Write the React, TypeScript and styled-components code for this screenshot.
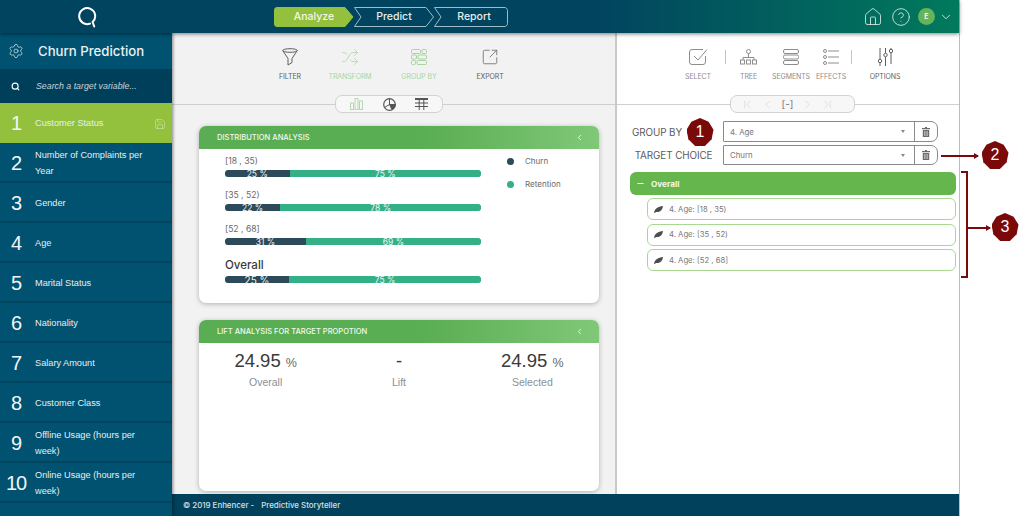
import React from 'react';
import styled, { createGlobalStyle } from 'styled-components';
import {
  ChevronDown, ChevronFirst, ChevronLast, ChevronLeft, ChevronRight, CircleHelp, House, Minus, Save, Search, Settings, Shuffle, SquareArrowOutUpRight,
} from 'lucide-react';

const GlobalStyle = createGlobalStyle`
  html, body { margin: 0; padding: 0; background: #fff; }
  * { box-sizing: border-box; }
  body { font-family: Inter, "Liberation Sans", sans-serif; overflow: hidden; }
`;

const Page = styled.div`
  position: relative;
  width: 1023px;
  height: 516px;
  overflow: hidden;
  background: #fff;
`;

const Frame = styled.div`
  width: 960px;
  height: 516px;
  display: grid;
  grid-template-columns: 172px 1fr;
  grid-template-rows: 33px 1fr;
  border-right: 1px solid #bdbdbd;
`;

const Header = styled.header`
  grid-column: 1 / 3;
  position: relative;
  z-index: 3;
  display: flex;
  align-items: center;
  background: linear-gradient(90deg, #01445f 0%, #01445f 62%, #017a5c 100%);
  box-shadow: 0 1px 4px rgba(0, 0, 0, 0.5);
`;

const Logo = styled.div`
  width: 274px;
  padding-left: 78px;
  display: flex;
`;

const Stepper = styled.nav`
  display: flex;
`;

const Step = styled.div<{ $w: number; $active?: boolean; $shift?: number }>`
  position: relative;
  width: ${p => p.$w}px;
  height: 20px;
  padding-left: ${p => p.$shift || 0}px;
  display: flex;
  align-items: center;
  justify-content: center;
  color: ${p => (p.$active ? '#f2f7e6' : '#e8eef0')};
  font-size: 10.5px;
  font-weight: 500;
  span { position: relative; }
  svg { position: absolute; left: 0; top: 0; }
`;

const HeaderRight = styled.div`
  margin-left: auto;
  display: flex;
  align-items: center;
  padding-right: 6px;
  color: #dfeee9;
`;

const Avatar = styled.div`
  width: 17px;
  height: 17px;
  margin: 0 4px 0 7px;
  border-radius: 50%;
  background: #67b359;
  color: #f4f9f1;
  display: flex;
  align-items: center;
  justify-content: center;
  font-size: 7px;
  font-weight: 700;
`;

const Sidebar = styled.aside`
  position: relative;
  z-index: 2;
  background: #005270;
  box-shadow: 1px 0 3px rgba(0, 0, 0, 0.45);
`;

const SideTitle = styled.div`
  height: 36px;
  display: flex;
  align-items: center;
  padding-left: 8px;
  gap: 14px;
  color: #e9f1f4;
  font-size: 13.2px;
  font-weight: 500;
`;

const SearchRow = styled.div`
  height: 34px;
  display: flex;
  align-items: center;
  padding-left: 11px;
  gap: 16px;
  background: #003f5a;
  color: #fff;
  em {
    font-family: "Liberation Sans", sans-serif;
    font-size: 8.8px;
    color: #c6d5db;
  }
`;

const VarRow = styled.div<{ $active?: boolean }>`
  height: 40px;
  padding-top: 2px;
  display: flex;
  align-items: center;
  position: relative;
  background: ${p => (p.$active ? '#93c13e' : '#005270')};
  border-bottom: 2px solid ${p => (p.$active ? '#93c13e' : '#004660')};
  font-family: "Liberation Sans", sans-serif;
  color: #e6eff2;
`;

const VarNum = styled.div`
  width: 32px;
  text-align: center;
  font-size: 20px;
  letter-spacing: -1px;
  color: #f2f6f8;
  flex: none;
`;

const VarName = styled.div`
  margin-left: 3px;
  width: 118px;
  font-size: 9.2px;
  line-height: 16px;
`;

const SaveMark = styled.div`
  position: absolute;
  right: 6px;
  top: 15px;
  display: flex;
  color: #dcebbd;
`;

const Content = styled.main`
  display: grid;
  grid-template-columns: 443px 1fr;
  grid-template-rows: 1fr 22px;
  min-height: 0;
`;

const LeftPanel = styled.section`
  background: #f2f2f2;
  border-right: 2px solid #c9c9c9;
  width: 445px;
  min-height: 0;
  overflow: hidden;
`;

const RightPanel = styled.section`
  background: #fff;
  margin-left: 2px;
  min-height: 0;
`;

const Toolbar = styled.div<{ $start: number }>`
  height: 62px;
  display: flex;
  padding: 15px 0 0 ${p => p.$start}px;
`;

const ToolItem = styled.div<{ $w: number; $off?: boolean; $soft?: boolean }>`
  width: ${p => p.$w}px;
  flex: none;
  display: flex;
  flex-direction: column;
  align-items: center;
  color: ${p => (p.$off ? '#a9d5a0' : p.$soft ? '#8d8d8d' : '#5f5f5f')};
  svg { height: 18px; display: block; }
`;

const ToolLabel = styled.div`
  margin-top: 6px;
  font-size: 7px;
  line-height: 9px;
  white-space: nowrap;
  letter-spacing: -0.1px;
`;

const ToolSep = styled.div`
  width: 1px;
  height: 14px;
  margin-top: 2px;
  background: #c4c4c4;
  flex: none;
`;

const RuleRow = styled.div`
  display: flex;
  align-items: center;
  height: 18px;
`;

const Rule = styled.div<{ $w?: number }>`
  height: 1px;
  background: #cfcfcf;
  width: ${p => (p.$w ? `${p.$w}px` : 'auto')};
  flex: ${p => (p.$w ? 'none' : 1)};
`;

const Pill = styled.div<{ $w: number; $l: number; $r: number }>`
  width: ${p => p.$w}px;
  height: 18px;
  border: 1px solid #d2d2d2;
  border-radius: 7px;
  background: #f7f7f7;
  display: flex;
  align-items: center;
  justify-content: space-between;
  padding: 0 ${p => p.$r}px 0 ${p => p.$l}px;
  flex: none;
`;

const PagerMark = styled.span`
  font-size: 10px;
  line-height: 12px;
  color: #777;
`;

const Card = styled.article<{ $h: number }>`
  width: 400px;
  height: ${p => p.$h}px;
  margin: 13px 0 17px 27px;
  background: #fff;
  border-radius: 7px;
  overflow: hidden;
  box-shadow: 0 1px 5px rgba(0, 0, 0, 0.28);
  & + & { margin-top: 0; }
`;

const CardHead = styled.div`
  height: 23px;
  display: flex;
  align-items: center;
  justify-content: space-between;
  padding: 0 15px 0 18px;
  color: #f1f8ee;
  font-size: 7.55px;
  font-weight: 500;
  background: linear-gradient(90deg, #5aad52 0%, #59ad52 55%, #80c878 100%);
`;

const DistBody = styled.div`
  display: flex;
  padding: 1px 0 0 26px;
`;

const DistRows = styled.div`
  width: 256px;
`;

const DistLabel = styled.div<{ $big?: boolean }>`
  height: ${p => (p.$big ? 24 : 20)}px;
  line-height: ${p => (p.$big ? 27 : 22)}px;
  font-size: ${p => (p.$big ? 11.5 : 8.6)}px;
  font-weight: ${p => (p.$big ? 500 : 400)};
  color: ${p => (p.$big ? '#3a3a3a' : '#6a6a6a')};
`;

const Bar = styled.div`
  height: 7px;
  margin-bottom: 7px;
  display: flex;
  border-radius: 3.5px;
  background: #33b086;
`;

const BarPart = styled.div<{ $dark?: boolean; $big?: boolean }>`
  height: 7px;
  display: flex;
  align-items: center;
  justify-content: center;
  color: #eef7f4;
  font-size: ${p => (p.$big ? 10 : 8.5)}px;
  white-space: nowrap;
  background: ${p => (p.$dark ? '#2d4a5a' : '#33b086')};
  border-radius: ${p => (p.$dark ? '3.5px 0 0 3.5px' : '0 3.5px 3.5px 0')};
`;

const Legend = styled.div`
  margin: 4px 0 0 26px;
  display: flex;
  flex-direction: column;
  gap: 9px;
`;

const LegendItem = styled.div<{ $color: string }>`
  display: flex;
  align-items: center;
  gap: 11px;
  height: 14px;
  font-size: 8px;
  color: #6a6a6a;
  &::before {
    content: '';
    width: 7px;
    height: 7px;
    border-radius: 50%;
    background: ${p => p.$color};
  }
`;

const Stats = styled.div`
  display: grid;
  grid-template-columns: repeat(3, 1fr);
  padding-top: 6px;
  text-align: center;
  font-family: "Liberation Sans", sans-serif;
`;

const StatValue = styled.div`
  height: 24px;
  font-size: 18.5px;
  line-height: 24px;
  color: #3a3a3a;
  small { font-size: 12.5px; color: #666; }
`;

const StatLabel = styled.div`
  margin-top: 2px;
  font-size: 10.5px;
  line-height: 14px;
  color: #8b8f94;
`;

const Footer = styled.footer`
  grid-column: 1 / 3;
  background: #01415c;
  display: flex;
  align-items: center;
  padding-left: 11px;
  gap: 7px;
  color: #d5e1e6;
  font-size: 7.9px;
  font-weight: 500;
`;

const Form = styled.div`
  padding: 8px 0 0 15px;
`;

const FormRow = styled.div<{ $h: number; $gap: number }>`
  display: flex;
  align-items: center;
  height: ${p => p.$h}px;
  margin-bottom: ${p => p.$gap}px;
`;

const FormLabel = styled.div`
  width: 91px;
  font-size: 9.9px;
  color: #5b5b5b;
  white-space: nowrap;
  letter-spacing: -0.1px;
`;

const Select = styled.div`
  width: 215px;
  height: 100%;
  display: flex;
  border: 1px solid #8a8a8a;
  border-radius: 1px 7px 7px 1px;
`;

const SelectValue = styled.div`
  flex: 1;
  display: flex;
  align-items: center;
  justify-content: space-between;
  padding: 0 9px 0 6px;
  font-size: 7.8px;
  color: #777;
  &::after {
    content: '';
    border: 2.5px solid transparent;
    border-top: 3px solid #888;
    border-bottom: 0;
  }
`;

const SelectTrash = styled.div`
  width: 23px;
  border-left: 1px solid #8a8a8a;
  display: flex;
  align-items: center;
  justify-content: center;
`;

const Tree = styled.div`
  padding: 7px 3px 0 13px;
  display: flex;
  flex-direction: column;
  align-items: flex-end;
`;

const TreeRoot = styled.div`
  width: 100%;
  height: 23px;
  margin-bottom: 3px;
  display: flex;
  align-items: center;
  gap: 6px;
  padding-left: 6px;
  border-radius: 6px;
  background: #65b64c;
  color: #f1f8ed;
  font-size: 8.2px;
  font-weight: 700;
`;

const TreeLeaf = styled.div`
  width: 309px;
  height: 22px;
  margin-bottom: 3.5px;
  display: flex;
  align-items: center;
  gap: 6px;
  padding-left: 6px;
  border: 1px solid #a8d892;
  border-radius: 6px;
  font-size: 7.7px;
  color: #777;
`;

const Badge = styled.div<{ $x: number; $y: number }>`
  position: absolute;
  left: ${p => p.$x - 13.5}px;
  top: ${p => p.$y - 14}px;
  width: 27px;
  height: 28px;
  display: flex;
  align-items: center;
  justify-content: center;
  background: #7a0909;
  clip-path: polygon(50% 0, 82% 13%, 100% 42%, 93% 76%, 68% 100%, 32% 100%, 7% 76%, 0 42%, 18% 13%);
  color: #fff;
  font-family: "Liberation Sans", sans-serif;
  font-size: 16px;
`;

const Arrow = styled.div<{ $x: number; $y: number; $w: number }>`
  position: absolute;
  left: ${p => p.$x}px;
  top: ${p => p.$y}px;
  width: ${p => p.$w}px;
  height: 2px;
  background: #7a0909;
  &::after {
    content: '';
    position: absolute;
    right: -1px;
    top: -2px;
    border-left: 5px solid #7a0909;
    border-top: 3px solid transparent;
    border-bottom: 3px solid transparent;
  }
`;

const Bracket = styled.div`
  position: absolute;
  left: 961px;
  top: 171px;
  width: 7px;
  height: 107px;
  border: 2px solid #7a0909;
  border-left: 0;
`;

const FILTER_ROWS = [
  { label: '[18 , 35)', churn: 25, bar: 25.2, keep: 75 },
  { label: '[35 , 52)', churn: 22, bar: 21.6, keep: 78 },
  { label: '[52 , 68]', churn: 31, bar: 31.6, keep: 69 },
];

const VARIABLES = [
  'Number of Complaints per Year',
  'Gender',
  'Age',
  'Marital Status',
  'Nationality',
  'Salary Amount',
  'Customer Class',
  'Offline Usage (hours per week)',
  'Online Usage (hours per week)',
];

const LogoMark = () => (
  <svg width="19" height="22" viewBox="0 0 19 22" fill="none" stroke="#fff" strokeWidth="2">
    <path d="M12 17.6A8 8 0 1 1 14.6 16L16.2 20.5" strokeLinecap="round" strokeLinejoin="round" />
  </svg>
);

const StepShape = ({ w, active, last }: { w: number; active?: boolean; last?: boolean }) => {
  const d = active
    ? `M3 .5H${w - 9}L${w - 1} 10L${w - 9} 19.5H3A2.5 2.5 0 0 1 .5 17V3A2.5 2.5 0 0 1 3 .5Z`
    : last
      ? `M.5 .5H${w - 4}A3 3 0 0 1 ${w - .5} 3.5V16.5A3 3 0 0 1 ${w - 4} 19.5H.5L7 10Z`
      : `M.5 .5H${w - 8}L${w - .5} 10L${w - 8} 19.5H.5L7 10Z`;
  return (
    <svg width={w} height="20" viewBox={`0 0 ${w} 20`}>
      <path d={d} fill={active ? '#93c13e' : 'none'} stroke={active ? '#93c13e' : '#9fbcc7'} />
    </svg>
  );
};

const FunnelIcon = () => (
  <svg width="16" height="18" viewBox="0 0 16 18" fill="none" stroke="currentColor">
    <ellipse cx="8" cy="2.5" rx="7.3" ry="1.8" />
    <path d="M.7 2.5L6 10.5V17L10 14.5V10.5L15.3 2.5" />
  </svg>
);

const GroupIcon = () => (
  <svg width="16" height="16" viewBox="0 0 16 16" fill="none" stroke="currentColor">
    <rect x=".5" y=".5" width="9" height="4" rx="1" /><rect x="11" y=".5" width="4.5" height="4" rx="1" />
    <rect x=".5" y="6" width="5" height="4" rx="1" /><rect x="7" y="6" width="8.5" height="4" rx="1" />
    <rect x=".5" y="11.5" width="4" height="4" rx="1" /><rect x="6" y="11.5" width="9.5" height="4" rx="1" />
  </svg>
);

const SelectIcon = () => (
  <svg width="19" height="18" viewBox="0 0 19 18" fill="none" stroke="currentColor">
    <path d="M16.5 8V14A2.5 2.5 0 0 1 14 16.5H3A2.5 2.5 0 0 1 .5 14V4A2.5 2.5 0 0 1 3 1.5H14" />
    <path d="M5 8L9 12L18 1.5" />
  </svg>
);

const TreeIcon = () => (
  <svg width="17" height="16" viewBox="0 0 17 16" fill="none" stroke="currentColor">
    <circle cx="8.5" cy="2.5" r="2" /><path d="M8.5 4.5V9M3 11V8.5H14V11" />
    <rect x=".5" y="11" width="4" height="4" /><rect x="6.5" y="11" width="4" height="4" /><rect x="12.5" y="11" width="4" height="4" />
  </svg>
);

const SegmentsIcon = () => (
  <svg width="16" height="16" viewBox="0 0 16 16" fill="none" stroke="currentColor">
    <rect x=".5" y=".5" width="15" height="4" rx="1.5" /><rect x=".5" y="6" width="15" height="4" rx="1.5" /><rect x=".5" y="11.5" width="15" height="4" rx="1.5" />
  </svg>
);

const EffectsIcon = () => (
  <svg width="16" height="16" viewBox="0 0 16 16" fill="none" stroke="currentColor">
    <circle cx="2" cy="2" r="1.5" /><circle cx="2" cy="8" r="1.5" /><circle cx="2" cy="14" r="1.5" />
    <path d="M5 2H16M5 8H16M5 14H16" />
  </svg>
);

const OptionsIcon = () => (
  <svg width="15" height="18" viewBox="0 0 15 18" fill="none" stroke="currentColor">
    <path d="M2 0V11M2 15V18M7.5 0V5M7.5 9V18M13 0V1M13 5V16" />
    <circle cx="2" cy="13" r="1.7" /><circle cx="7.5" cy="7" r="1.7" /><circle cx="13" cy="3" r="1.7" />
  </svg>
);

const TrashIcon = () => (
  <svg width="8" height="10" viewBox="0 0 8 10">
    <path d="M3 0H5V1H8V2.2H0V1H3ZM.8 3H7.2V10H.8Z" fill="#6b6b6b" />
    <path d="M2.6 4V9M4 4V9M5.4 4V9" stroke="#fff" strokeWidth=".5" />
  </svg>
);

const BarsIcon = () => (
  <svg width="13" height="12" viewBox="0 0 13 12" fill="none" stroke="#b5d8ae">
    <rect x=".5" y="5" width="3" height="6.5" /><rect x="5" y=".5" width="3" height="11" /><rect x="9.5" y="3" width="3" height="8.5" />
  </svg>
);

const PieIcon = () => (
  <svg width="13" height="13" viewBox="0 0 13 13" fill="none" stroke="#555">
    <circle cx="6.5" cy="6.5" r="5.8" strokeWidth="1.2" /><path d="M6.5 6.5V.7M6.5 6.5L1.5 9.5" />
    <path d="M6.5 6.5H12.3A5.8 5.8 0 0 1 9 11.7Z" fill="#555" />
  </svg>
);

const TableIcon = () => (
  <svg width="13" height="12" viewBox="0 0 13 12" fill="none" stroke="#555">
    <path d="M0 1H13" strokeWidth="2" /><path d="M0 5H13M0 8.5H13M4.2 2V12M8.8 2V12" />
  </svg>
);

const LeafIcon = () => (
  <svg width="9" height="7" viewBox="0 0 9 7">
    <path d="M0 6.5C1 2.5 4 .5 9 0C8.5 4 6 6.5 2 6L.8 7Z" fill="#4d4d4d" />
  </svg>
);

const App: React.FC = () => (
  <Page>
    <GlobalStyle />
    <Frame>
      <Header>
        <Logo><LogoMark /></Logo>
        <Stepper>
          <Step $w={80} $active><StepShape w={80} active /><span>Analyze</span></Step>
          <Step $w={80}><StepShape w={80} /><span>Predict</span></Step>
          <Step $w={74} $shift={6}><StepShape w={74} last /><span>Report</span></Step>
        </Stepper>
        <HeaderRight>
          <House size={20} strokeWidth={1} />
          <CircleHelp size={20} strokeWidth={1} style={{ marginLeft: 8 }} />
          <Avatar>E</Avatar>
          <ChevronDown size={14} strokeWidth={1.5} />
        </HeaderRight>
      </Header>

      <Sidebar>
        <SideTitle><Settings size={16} strokeWidth={1} />Churn Prediction</SideTitle>
        <SearchRow><Search size={9} strokeWidth={3} /><em>Search a target variable...</em></SearchRow>
        <VarRow $active>
          <VarNum>1</VarNum>
          <VarName>Customer Status</VarName>
          <SaveMark><Save size={12} strokeWidth={1} /></SaveMark>
        </VarRow>
        {VARIABLES.map((name, i) => (
          <VarRow key={name}>
            <VarNum>{i + 2}</VarNum>
            <VarName>{name}</VarName>
          </VarRow>
        ))}
      </Sidebar>

      <Content>
        <LeftPanel>
          <Toolbar $start={88}>
            <ToolItem $w={60}><FunnelIcon /><ToolLabel>FILTER</ToolLabel></ToolItem>
            <ToolItem $w={60} $off><Shuffle size={18} strokeWidth={1} /><ToolLabel>TRANSFORM</ToolLabel></ToolItem>
            <ToolItem $w={78} $off><GroupIcon /><ToolLabel>GROUP BY</ToolLabel></ToolItem>
            <ToolItem $w={64}><SquareArrowOutUpRight size={18} strokeWidth={1} /><ToolLabel>EXPORT</ToolLabel></ToolItem>
          </Toolbar>
          <RuleRow>
            <Rule $w={163} />
            <Pill $w={108} $l={14} $r={14}><BarsIcon /><PieIcon /><TableIcon /></Pill>
            <Rule />
          </RuleRow>
          <Card $h={177}>
            <CardHead>DISTRIBUTION ANALYSIS<ChevronLeft size={9} strokeWidth={2.5} /></CardHead>
            <DistBody>
              <DistRows>
                {FILTER_ROWS.map(row => (
                  <div key={row.label}>
                    <DistLabel>{row.label}</DistLabel>
                    <Bar>
                      <BarPart $dark style={{ width: `${row.bar}%` }}>{row.churn} %</BarPart>
                      <BarPart style={{ flex: 1 }}>{row.keep} %</BarPart>
                    </Bar>
                  </div>
                ))}
                <DistLabel $big>Overall</DistLabel>
                <Bar>
                  <BarPart $dark $big style={{ width: '25%' }}>25 %</BarPart>
                  <BarPart style={{ flex: 1 }}>75 %</BarPart>
                </Bar>
              </DistRows>
              <Legend>
                <LegendItem $color="#2d4a5a">Churn</LegendItem>
                <LegendItem $color="#33b086">Retention</LegendItem>
              </Legend>
            </DistBody>
          </Card>
          <Card $h={171}>
            <CardHead>LIFT ANALYSIS FOR TARGET PROPOTION<ChevronLeft size={9} strokeWidth={2.5} /></CardHead>
            <Stats>
              <div><StatValue>24.95 <small>%</small></StatValue><StatLabel>Overall</StatLabel></div>
              <div><StatValue>-</StatValue><StatLabel>Lift</StatLabel></div>
              <div><StatValue>24.95 <small>%</small></StatValue><StatLabel>Selected</StatLabel></div>
            </Stats>
          </Card>
        </LeftPanel>

        <RightPanel>
          <Toolbar $start={54}>
            <ToolItem $w={54} $soft><SelectIcon /><ToolLabel>SELECT</ToolLabel></ToolItem>
            <ToolSep />
            <ToolItem $w={45} $soft><TreeIcon /><ToolLabel>TREE</ToolLabel></ToolItem>
            <ToolItem $w={40} $soft><SegmentsIcon /><ToolLabel>SEGMENTS</ToolLabel></ToolItem>
            <ToolItem $w={40} $soft><EffectsIcon /><ToolLabel>EFFECTS</ToolLabel></ToolItem>
            <ToolSep />
            <ToolItem $w={66}><OptionsIcon /><ToolLabel>OPTIONS</ToolLabel></ToolItem>
          </Toolbar>
          <RuleRow>
            <Rule $w={113} />
            <Pill $w={125} $l={10} $r={20}>
              <ChevronFirst size={13} strokeWidth={1.2} color="#d0d0d0" />
              <ChevronLeft size={13} strokeWidth={1.2} color="#d0d0d0" />
              <PagerMark>[-]</PagerMark>
              <ChevronRight size={13} strokeWidth={1.2} color="#d0d0d0" />
              <ChevronLast size={13} strokeWidth={1.2} color="#d0d0d0" />
            </Pill>
            <Rule />
          </RuleRow>
          <Form>
            <FormRow $h={21} $gap={3}>
              <FormLabel>GROUP BY</FormLabel>
              <Select><SelectValue>4. Age</SelectValue><SelectTrash><TrashIcon /></SelectTrash></Select>
            </FormRow>
            <FormRow $h={20} $gap={0}>
              <FormLabel>&nbsp;TARGET CHOICE</FormLabel>
              <Select><SelectValue>Churn</SelectValue><SelectTrash><TrashIcon /></SelectTrash></Select>
            </FormRow>
          </Form>
          <Tree>
            <TreeRoot><Minus size={9} strokeWidth={3} />Overall</TreeRoot>
            <TreeLeaf><LeafIcon />4. Age: [18 , 35)</TreeLeaf>
            <TreeLeaf><LeafIcon />4. Age: [35 , 52)</TreeLeaf>
            <TreeLeaf><LeafIcon />4. Age: [52 , 68]</TreeLeaf>
          </Tree>
        </RightPanel>

        <Footer><span>© 2019 Enhencer -</span><span>Predictive Storyteller</span></Footer>
      </Content>
    </Frame>

    <Badge $x={700} $y={132}>1</Badge>
    <Arrow $x={941} $y={154.5} $w={37} />
    <Badge $x={995} $y={155}>2</Badge>
    <Bracket />
    <Arrow $x={968} $y={226.5} $w={22} />
    <Badge $x={1005} $y={227}>3</Badge>
  </Page>
);

export default App;
